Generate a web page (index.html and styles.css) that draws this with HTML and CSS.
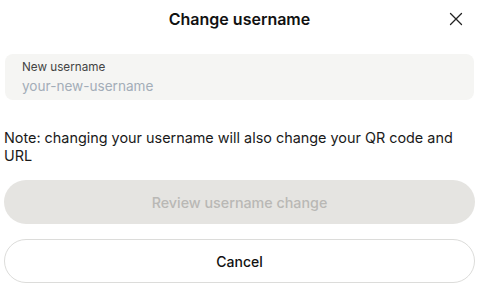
FILE: index.html
```html
<!DOCTYPE html>
<html lang="en">
<head>
    <meta charset="UTF-8">
    <meta name="viewport" content="width=device-width, initial-scale=1.0">
    <title>Change username</title>
    <link rel="stylesheet" href="styles.css">
</head>
<body>
    <div class="dialog">
        <div class="dialog-header">
            <h1 class="dialog-title">Change username</h1>
            <button class="close-button" aria-label="Close">
                <svg width="14" height="14" viewBox="0 0 14 14" fill="none">
                    <path d="M1.5 1.5L12.5 12.5M12.5 1.5L1.5 12.5" stroke="#222" stroke-width="1.3" stroke-linecap="round"/>
                </svg>
            </button>
        </div>

        <label class="input-box">
            <span class="input-label">New username</span>
            <input type="text" class="input-field" placeholder="your-new-username">
        </label>

        <p class="note">Note: changing your username will also change your QR code and URL</p>

        <button class="primary-button" disabled>Review username change</button>
        <button class="secondary-button">Cancel</button>
    </div>
</body>
</html>
```

FILE: styles.css
```css
* {
    margin: 0;
    padding: 0;
    box-sizing: border-box;
    font-family: Inter, "Liberation Sans", sans-serif;
}

body {
    background-color: #fff;
    color: #1a1a1a;
    font-size: 14px;
}

.dialog {
    display: flex;
    flex-direction: column;
    padding: 0 4px;
}

.dialog-header {
    position: relative;
    height: 38px;
    display: flex;
    align-items: center;
    justify-content: center;
    margin-bottom: 16px;
}

.dialog-title {
    font-size: 16px;
    font-weight: 600;
    color: #111;
}

.close-button {
    position: absolute;
    right: 12px;
    top: 12px;
    background: none;
    border: none;
    cursor: pointer;
    display: flex;
}

.input-box {
    display: flex;
    flex-direction: column;
    gap: 3px;
    margin: 0 1px;
    height: 46px;
    padding: 6px 17px;
    background-color: #f5f5f3;
    border-radius: 8px;
}

.input-label {
    font-size: 11.7px;
    color: #444;
    line-height: 14px;
}

.input-field {
    border: none;
    background: none;
    outline: none;
    font-size: 13.6px;
    line-height: 19px;
    color: #1a1a1a;
}

.input-field::placeholder {
    color: #a3adb8;
}

.note {
    margin-top: 29px;
    font-size: 14.4px;
    line-height: 18px;
    color: #1a1a1a;
}

.primary-button,
.secondary-button {
    height: 44px;
    border-radius: 22px;
    font-size: 14px;
    font-weight: 500;
    cursor: pointer;
}

.primary-button {
    margin-top: 15px;
    border: none;
    background-color: #e5e4e1;
    color: #b9b8b5;
    font-size: 14.3px;
}

.secondary-button {
    margin-top: 15px;
    border: 1px solid #dcdcda;
    background-color: #fff;
    color: #111;
}
```
